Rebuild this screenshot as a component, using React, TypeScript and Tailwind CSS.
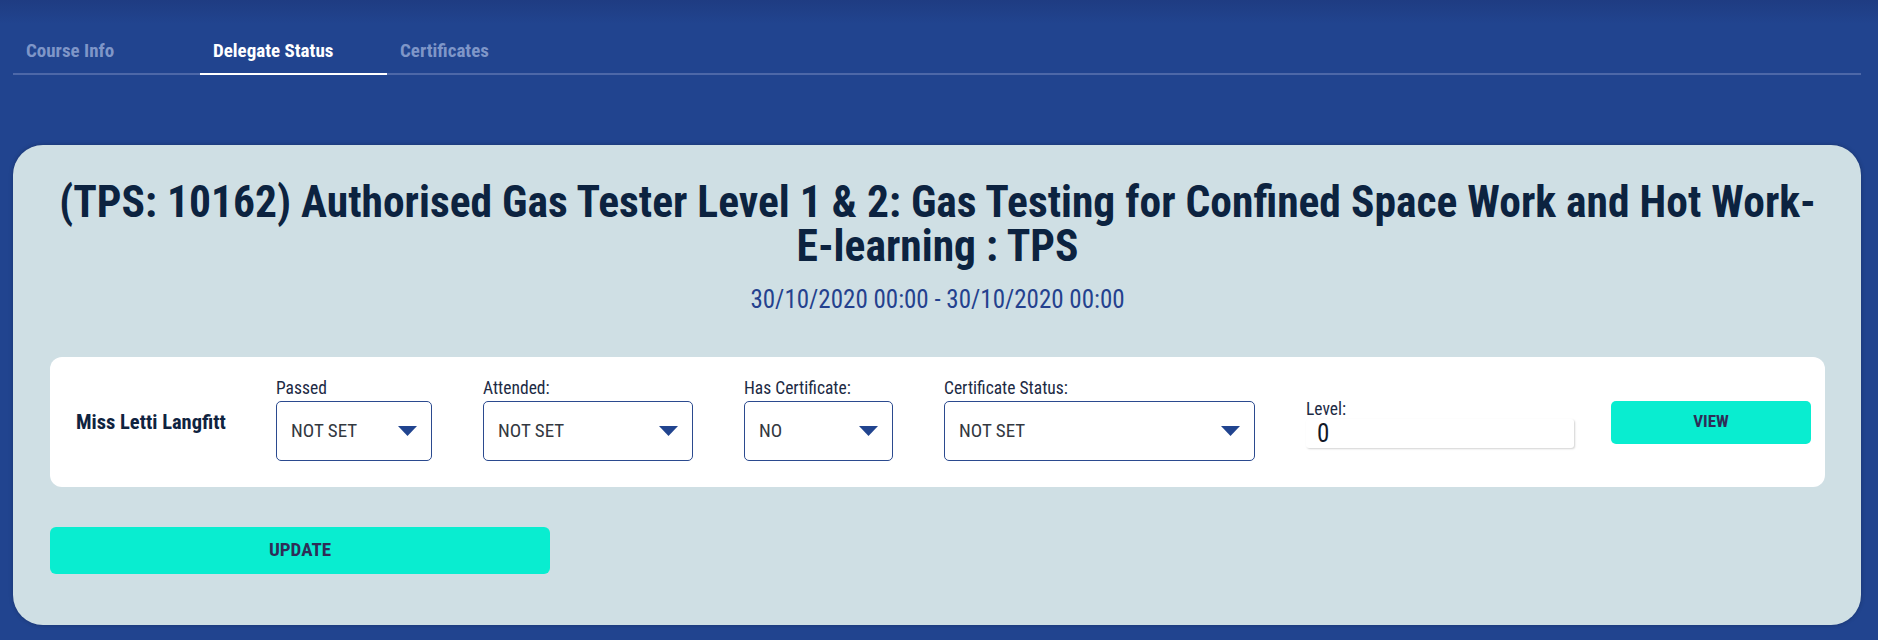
import { useState } from 'react';

const tabs = ['Course Info', 'Delegate Status', 'Certificates'];

const Caret = () => (
  <svg width="19" height="10" viewBox="0 0 19 10" className="shrink-0">
    <polygon points="0,0 19,0 9.5,10" fill="#21448f" />
  </svg>
);

const SelectField = ({
  label,
  value,
  width,
}: {
  label: string;
  value: string;
  width: string;
}) => (
  <div className={`flex flex-col pb-[5px] ${width}`}>
    <span className="mb-[3px] text-[17.5px] leading-[20px] text-[#1c2a44]">
      {label}
    </span>
    <button
      type="button"
      className="flex h-[60px] w-full items-center justify-between rounded-[5px] border border-[#2b4a8f] bg-white pl-[14px] pr-[14px] text-left"
    >
      <span className="text-[19px] leading-[24px] text-[#33383f]">{value}</span>
      <Caret />
    </button>
  </div>
);

export default function App() {
  const [active, setActive] = useState(1);
  const [level, setLevel] = useState('0');

  return (
    <div className="min-h-[640px] bg-[linear-gradient(180deg,#1f3c82_0px,#21448f_24px,#21448f_100%)] pb-[15px] pl-[13px] pr-[17px] pt-[27px] font-['Roboto_Condensed','Roboto','Liberation_Sans',sans-serif] font-stretch-condensed">
      <nav className="flex border-b-2 border-[#4d68a8]">
        {tabs.map((tab, i) => (
          <button
            key={tab}
            type="button"
            onClick={() => setActive(i)}
            className={`-mb-[2px] w-[187px] border-b-2 pb-[10px] pl-[13px] pt-3 text-left text-[19px] font-bold leading-[24px] ${
              active === i
                ? 'border-white text-white'
                : 'border-transparent text-[#7f96c8]'
            }`}
          >
            {tab}
          </button>
        ))}
      </nav>

      <section className="mt-[70px] rounded-[30px] bg-[#cfdfe4] pb-[51px] pl-[37px] pr-[36px] pt-[36px] shadow-[0_0_4px_rgba(0,0,0,0.25)]">
        <h1 className="-mx-[24px] text-center text-[43.5px] font-bold leading-[44px] text-[#0c2340]">
          (TPS: 10162) Authorised Gas Tester Level 1 &amp; 2: Gas Testing for
          Confined Space Work and Hot Work-E‑learning : TPS
        </h1>
        <p className="mt-[16px] text-center text-[25px] leading-[30px] text-[#24418e]">
          30/10/2020 00:00 - 30/10/2020 00:00
        </p>

        <div className="mt-[42px] flex h-[130px] items-center rounded-[12px] bg-white pl-[26px]">
          <div className="w-[200px] text-[20.5px] font-bold leading-[24px] text-[#0f2340]">
            Miss Letti Langfitt
          </div>
          <div className="flex items-center gap-[51px]">
            <SelectField label="Passed" value="NOT SET" width="w-[156px]" />
            <SelectField label="Attended:" value="NOT SET" width="w-[210px]" />
            <SelectField label="Has Certificate:" value="NO" width="w-[149px]" />
            <SelectField
              label="Certificate Status:"
              value="NOT SET"
              width="w-[311px]"
            />
            <div className="flex w-[268px] flex-col pt-[4px]">
              <span className="mb-[1px] text-[17.5px] leading-[18px] text-[#1c2a44]">
                Level:
              </span>
              <input
                value={level}
                onChange={(e) => setLevel(e.target.value)}
                className="h-[29px] w-full rounded-[3px] bg-white pl-[11px] text-[25px] leading-[29px] text-[#111827] shadow-[1px_1px_2px_rgba(0,0,0,0.18)] outline-none"
              />
            </div>
          </div>
          <button
            type="button"
            className="ml-[37px] h-[43px] w-[200px] rounded-[5px] bg-[#09edd0] text-[17px] font-bold text-[#2f2d57]"
          >
            VIEW
          </button>
        </div>

        <button
          type="button"
          className="mt-[40px] h-[47px] w-[500px] rounded-[6px] bg-[#09edd0] text-[19px] font-bold text-[#2f2d57]"
        >
          UPDATE
        </button>
      </section>
    </div>
  );
}
